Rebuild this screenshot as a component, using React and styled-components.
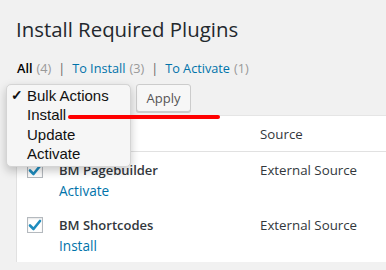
import React from "react";
import styled, { createGlobalStyle } from "styled-components";

const Global = createGlobalStyle`
  html, body { margin: 0; padding: 0; background: #f1f1f1; }
  body { font-family: "Open Sans", "Liberation Sans", sans-serif; color: #23282d; }
  * { box-sizing: border-box; }
`;

const Page = styled.div`
  position: relative;
  width: 386px;
  height: 270px;
  overflow: hidden;
  padding: 14px 0 0 16px;
`;

const Title = styled.h1`
  margin: 0;
  font-size: 20.4px;
  font-weight: 400;
  line-height: 30px;
  color: #23282d;
`;

const Filters = styled.div`
  display: flex;
  align-items: center;
  margin-top: 14px;
  margin-left: 1px;
  font-size: 12.7px;
  line-height: 20px;
  color: #555;
`;

const FilterItem = styled.span`
  color: ${(p) => (p.$current ? "#000" : "#0073aa")};
  font-weight: ${(p) => (p.$current ? 600 : 400)};
`;

const Count = styled.span`
  color: #999;
  font-weight: 400;
  margin-left: 4px;
`;

const Sep = styled.span`
  color: #666;
  margin: 0 7px;
`;

const Toolbar = styled.div`
  display: flex;
  gap: 6px;
  margin-top: 6px;
`;

const SelectBox = styled.div`
  width: 114px;
  height: 28px;
  background: #fff;
  border: 1px solid #ddd;
  border-radius: 3px;
`;

const Button = styled.div`
  width: 55px;
  height: 28px;
  border: 1px solid #ccc;
  border-radius: 3px;
  background: #f7f7f7;
  box-shadow: 0 1px 0 #ccc;
  font-size: 13px;
  line-height: 26px;
  text-align: center;
  color: #555;
`;

const Table = styled.div`
  margin-top: 3px;
  background: #fff;
  border-left: 1px solid #e1e1e1;
  border-top: 1px solid #e5e5e5;
`;

const HeadRow = styled.div`
  display: grid;
  grid-template-columns: 42px 200px 1fr;
  height: 36px;
  align-items: center;
  border-bottom: 1px solid #e1e1e1;
  font-size: 13.3px;
  color: #32373c;
`;

const Row = styled.div`
  display: grid;
  grid-template-columns: 42px 200px 1fr;
  height: 55px;
  padding-top: 9px;
  align-items: start;
  font-size: 13.3px;
  color: #32373c;
`;

const CheckCell = styled.div`
  padding-left: 10px;
  padding-top: 1px;
`;

const Box = styled.div`
  width: 16px;
  height: 16px;
  border: 1px solid #b4b9be;
  background: #fff;
  box-shadow: inset 0 1px 2px rgba(0,0,0,0.1);
  display: flex;
  align-items: center;
  justify-content: center;
`;

const Name = styled.div`
  font-weight: 600;
  font-size: 13px;
  line-height: 18px;
`;

const Action = styled.div`
  color: #0073aa;
  font-size: 13.6px;
  line-height: 20px;
  margin-top: 2px;
`;

const Source = styled.div`
  line-height: 18px;
  padding-left: 1px;
`;

const Menu = styled.div`
  position: absolute;
  left: 6px;
  top: 84px;
  width: 125px;
  height: 83px;
  background: #f6f6f6;
  border: 1px solid #d4d4d4;
  border-radius: 5px;
  box-shadow: 0 4px 10px rgba(0,0,0,0.22);
  padding-top: 1px;
  font-family: "Liberation Sans", Arial, sans-serif;
  font-size: 15px;
  color: #111;
`;

const MenuItem = styled.div`
  position: relative;
  height: 19.3px;
  line-height: 19px;
  padding-left: 20px;
`;

const Tick = styled.span`
  position: absolute;
  left: 4px;
  top: 0;
  font-size: 14px;
  font-weight: 700;
`;

const Annotation = styled.div`
  position: absolute;
  left: 68px;
  top: 115px;
  width: 152px;
  height: 4px;
  border-radius: 2px;
  background: #ff0000;
`;

const Check = () => (
  <svg width="14" height="12" viewBox="0 0 14 12">
    <path d="M2 6.5 L5.5 10 L12 2" fill="none" stroke="#1e8cbe" strokeWidth="2.6" strokeLinecap="round" strokeLinejoin="round" />
  </svg>
);

const plugins = [
  { name: "BM Pagebuilder", action: "Activate" },
  { name: "BM Shortcodes", action: "Install" },
];

export default function App() {
  return (
    <Page>
      <Global />
      <Title>Install Required Plugins</Title>
      <Filters>
        <FilterItem $current>All<Count>(4)</Count></FilterItem>
        <Sep>|</Sep>
        <FilterItem>To Install<Count>(3)</Count></FilterItem>
        <Sep>|</Sep>
        <FilterItem>To Activate<Count>(1)</Count></FilterItem>
      </Filters>
      <Toolbar>
        <SelectBox />
        <Button>Apply</Button>
      </Toolbar>
      <Table>
        <HeadRow>
          <CheckCell><Box /></CheckCell>
          <div />
          <Source>Source</Source>
        </HeadRow>
        {plugins.map((p) => (
          <Row key={p.name}>
            <CheckCell><Box><Check /></Box></CheckCell>
            <div>
              <Name>{p.name}</Name>
              <Action>{p.action}</Action>
            </div>
            <Source>External Source</Source>
          </Row>
        ))}
      </Table>
      <Menu>
        <MenuItem><Tick>✓</Tick>Bulk Actions</MenuItem>
        <MenuItem>Install</MenuItem>
        <MenuItem>Update</MenuItem>
        <MenuItem>Activate</MenuItem>
      </Menu>
      <Annotation />
    </Page>
  );
}
